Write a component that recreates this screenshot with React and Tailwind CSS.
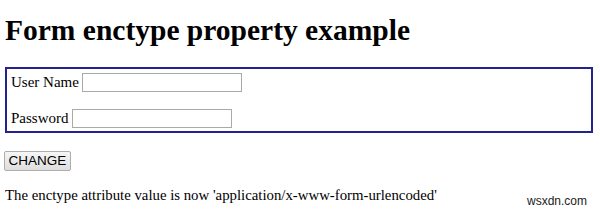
import React, { useState } from "react";

const App = () => {
  const [enctype, setEnctype] = useState("application/x-www-form-urlencoded");

  const handleChange = () => {
    setEnctype("multipart/form-data");
  };

  return (
    <div className="relative w-[600px] h-[213px] bg-white overflow-hidden font-['Liberation_Serif',serif] text-black">
      <div className="pl-[5px] pr-[8px]">
        <h1 className="pt-[14px] text-[29.5px] leading-[32px] font-bold">Form enctype property example</h1>

        {/* Form box */}
        <form className="mt-[21px] w-[588px] h-[66px] border-2 border-[#23238c] pl-[4px] pt-[4px] text-[15px]">
          <div className="flex items-center gap-[3px] h-[19px]">
            <label>User Name</label>
            <input type="text" className="w-[160px] h-[19px] border border-[#a9a9a9] bg-white" />
          </div>
          <div className="flex items-center gap-[3px] h-[19px] mt-[17px]">
            <label>Password</label>
            <input type="password" className="w-[160px] h-[19px] border border-[#a9a9a9] bg-white" />
          </div>
        </form>

        <button
          type="button"
          onClick={handleChange}
          className="mt-[18px] -ml-[1px] w-[67px] h-[20px] border border-[#adadad] rounded-[2px] bg-gradient-to-b from-[#f6f6f6] to-[#dedede] font-['Liberation_Sans',sans-serif] text-[13.5px] leading-[18px] text-black"
        >
          CHANGE
        </button>

        <p className="mt-[14px] text-[14.8px] leading-[18px]">
          The enctype attribute value is now '{enctype}'
        </p>
      </div>

      {/* watermark */}
      <div className="absolute left-[527px] top-[194px] font-['Liberation_Sans',sans-serif] text-[12px] leading-[14px] text-[#222]">
        wsxdn.com
      </div>
    </div>
  );
};

export default App;
